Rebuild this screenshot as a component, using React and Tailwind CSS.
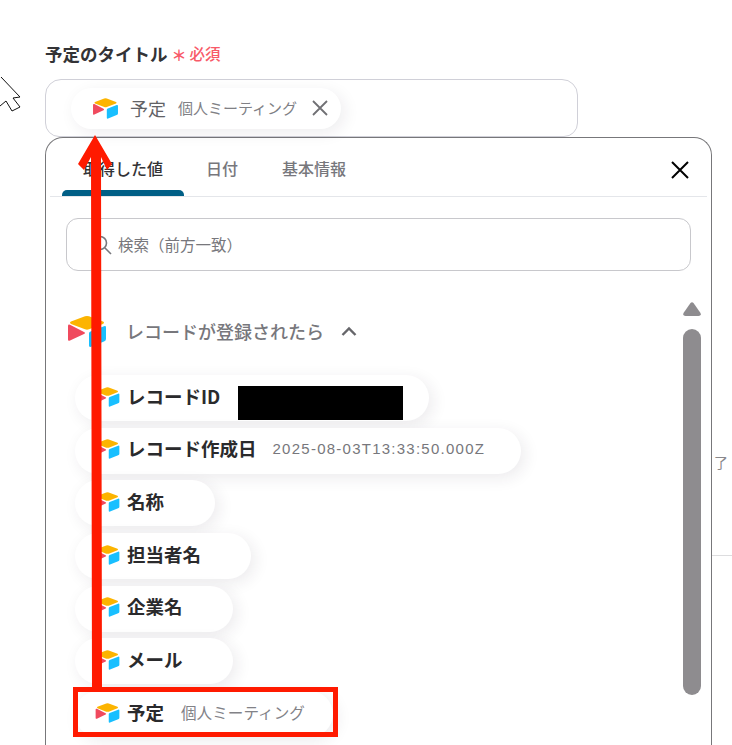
const font = { fontFamily: '"Noto Sans CJK JP", "Noto Sans", sans-serif' };

function AirtableIcon({ className }) {
  return (
    <svg viewBox="0 0 38 32" className={className}>
      <path d="M17 0.800 L3 6 Q1 7.200 3 8.400 L17 13.800 Q19 14.500 21 13.800 L35 8.400 Q37 7.200 35 6 L21 0.800 Q19 0.100 17 0.800 Z" fill="#fcb400" />
      <path d="M21 18 V30 Q21 32 23 31.200 L36 26 Q38 25.200 38 23.500 V12 Q38 10 36 10.800 L22.500 16 Q21 16.600 21 18 Z" fill="#18bfff" />
      <path d="M0 10.500 V24 Q0 26 2 25 L16 18.500 Q18 17.500 16 16.500 L2 9.300 Q0 8.500 0 10.500 Z" fill="#f04a5e" />
    </svg>
  );
}

function FieldPill({ name, value, mono, black, width }) {
  return (
    <div className={`flex h-[46px] items-center rounded-full bg-white pb-[3px] pl-[20px] shadow-[4px_4px_16px_rgba(40,30,50,0.09)] ${width}`}>
      <AirtableIcon className="h-[20px] w-[25px] shrink-0" />
      <span className="ml-[7px] text-[18.500px] font-bold text-[#2a2a2c]">{name}</span>
      {value && !mono && <span className="ml-[17px] text-[15.600px] text-[#828287]">{value}</span>}
      {mono && <span style={{ fontFamily: '"Liberation Sans", sans-serif' }} className="ml-[16px] text-[15px] tracking-[1.250px] text-[#77777c]">{value}</span>}
      {black && <span className="ml-[18px] mt-[13px] h-[34px] w-[165px] bg-black" />}
    </div>
  );
}

export default function App() {
  return (
    <div style={font} className="relative h-[745px] w-[732px] overflow-hidden bg-white pl-[45px] pt-[42px]">
      <div className="flex h-[24px] items-center">
        <span className="text-[17.500px] font-bold text-[#333336]">予定のタイトル</span>
        <span className="ml-[4px] text-[15px] leading-none font-bold text-[#f85a68]">＊</span>
        <span className="ml-[3px] text-[15.500px] font-medium text-[#f85a68]">必須</span>
      </div>

      <div className="mt-[13px] flex h-[58px] w-[533px] items-center rounded-t-[16px] rounded-b-[14px] border border-[#d0d0d8] pl-[25px]">
        <div className="flex h-[41px] w-[270px] items-center rounded-full bg-white pl-[22px] shadow-[4px_4px_16px_rgba(40,30,50,0.08)]">
          <AirtableIcon className="h-[21px] w-[25px] shrink-0" />
          <span className="ml-[12px] text-[18px] text-[#626266]">予定</span>
          <span className="ml-[12px] text-[15px] text-[#808085]">個人ミーティング</span>
          <svg viewBox="0 0 16 16" className="ml-[15px] h-[16px] w-[16px]" fill="none" stroke="#707074" strokeWidth="1.800">
            <path d="M1 1 L15 15 M15 1 L1 15" />
          </svg>
        </div>
      </div>

      <div className="h-[640px] w-[667px] rounded-t-[18px] border border-b-0 border-[#77777a] bg-white">
        <div className="relative mx-[4px] flex h-[59px] items-center border-b border-[#e4e6ea] pt-[2px]">
          <div className="relative ml-[12px] w-[122px] text-center text-[16px] font-medium text-[#333336]">
            取得した値
            <span className="absolute -bottom-[16px] left-0 h-[6px] w-[122px] rounded-t-[5px] bg-[#005f86]" />
          </div>
          <span className="ml-[22px] text-[16px] font-medium text-[#77777c]">日付</span>
          <span className="ml-[44px] text-[16px] font-medium text-[#77777c]">基本情報</span>
          <svg viewBox="0 0 18 18" className="absolute right-[18px] top-[23px] h-[18px] w-[18px]" fill="none" stroke="#000" strokeWidth="2">
            <path d="M1 1 L17 17 M17 1 L1 17" />
          </svg>
        </div>

        <div className="mx-[20px] mt-[21px] flex h-[53px] w-[625px] items-center rounded-[12px] border border-[#c8c8cc] pl-[25px]">
          <svg viewBox="0 0 20 20" className="h-[20px] w-[20px]" fill="none" stroke="#77777c" strokeWidth="1.600">
            <circle cx="8" cy="8" r="6.500" />
            <path d="M13 13 L19 19" />
          </svg>
          <span className="ml-[6px] text-[15.500px] text-[#77777c]">検索（前方一致）</span>
        </div>

        <div className="relative flex">
          <div className="w-[630px] pl-[22px] pt-[43px]">
            <div className="flex h-[34px] items-center">
              <AirtableIcon className="h-[33px] w-[38px] shrink-0" />
              <span className="ml-[20px] text-[18px] font-medium text-[#77777c]">レコードが登録されたら</span>
              <svg viewBox="0 0 16 10" className="ml-[17px] h-[10px] w-[16px]" fill="none" stroke="#66666a" strokeWidth="2.400">
                <path d="M1.500 9 L8 2.500 L14.500 9" />
              </svg>
            </div>
            <div className="-ml-[14px] mt-[27px] flex flex-col items-start gap-[6.700px] pl-[21px]">
              <FieldPill name="レコードID" black width="w-[354px]" />
              <FieldPill name="レコード作成日" value="2025-08-03T13:33:50.000Z" mono width="w-[446px]" />
              <FieldPill name="名称" width="w-[140px]" />
              <FieldPill name="担当者名" width="w-[176px]" />
              <FieldPill name="企業名" width="w-[158px]" />
              <FieldPill name="メール" width="w-[158px]" />
              <FieldPill name="予定" value="個人ミーティング" width="w-[258px]" />
            </div>
          </div>
          <div className="mt-[31px] ml-[7px] flex w-[18px] flex-col items-center">
            <svg viewBox="0 0 18 14" className="h-[14px] w-[18px]">
              <path d="M7.500 1 Q9 -0.300 10.500 1 L17.500 11 Q18.500 14 15.500 14 H2.500 Q-0.500 14 0.500 11 Z" fill="#8e8c8f" />
            </svg>
            <span className="mt-[13px] h-[366px] w-[18px] rounded-full bg-[#8e8c8f]" />
          </div>
        </div>
      </div>

      {/* background page peeking out to the right of the panel */}
      <span className="absolute left-[714px] top-[452px] text-[14px] text-[#88888c]">了</span>
      <span className="absolute left-[712px] top-[555px] h-px w-[20px] bg-[#dddddf]" />

      {/* annotations over the screenshot */}
      <svg viewBox="0 0 732 745" className="absolute left-0 top-0 h-[745px] w-[732px]" fill="none">
        <path d="M1 77 L20 97 L13 98 L20 107 L12 111 L6 101 L0 106" stroke="#111" strokeWidth="1" fill="#fff" />
        <path d="M95 135 L78 164 L84 170 L91 157 L92 688 L102 688 L101 157 L107 170 L112 164 Z" fill="#ff1a00" />
        <rect x="75.500" y="689.500" width="260" height="45" stroke="#ff1a00" strokeWidth="5" />
      </svg>
    </div>
  );
}
